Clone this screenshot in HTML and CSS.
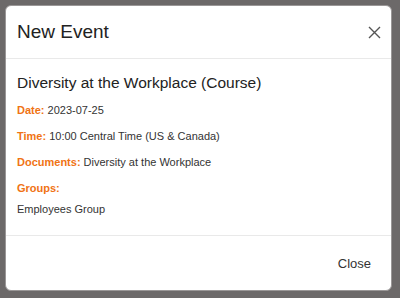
FILE: index.html
```html
<!DOCTYPE html>
<html lang="en">
<head>
    <meta charset="UTF-8">
    <meta name="viewport" content="width=device-width, initial-scale=1.0">
    <title>New Event</title>
    <link rel="stylesheet" href="styles.css">
</head>
<body>
    <div class="modal">
        <div class="modal-header">
            <h4 class="modal-title">New Event</h4>
            <button class="close" aria-label="Close">
                <svg width="13" height="13" viewBox="0 0 13 13">
                    <path d="M1 1 L12 12 M12 1 L1 12" stroke="#555" stroke-width="1.4" fill="none"/>
                </svg>
            </button>
        </div>
        <div class="modal-body">
            <h3 class="event-title">Diversity at the Workplace (Course)</h3>
            <div class="row"><span class="label">Date:</span> 2023-07-25</div>
            <div class="row"><span class="label">Time:</span> 10:00 Central Time (US &amp; Canada)</div>
            <div class="row"><span class="label">Documents:</span> Diversity at the Workplace</div>
            <div class="row"><span class="label">Groups:</span></div>
            <div class="group">Employees Group</div>
        </div>
        <div class="modal-footer">
            <button class="btn-close">Close</button>
        </div>
    </div>
</body>
</html>
```

FILE: styles.css
```css
body {
    margin: 0;
    padding: 5px 8px 7px 5px;
    background-color: #6c6969;
    font-family: "Liberation Sans", Arial, sans-serif;
    color: #333;
}
.modal {
    background-color: #fff;
    border: 1px solid #9a9797;
    border-radius: 6px;
    height: 284px;
    display: flex;
    flex-direction: column;
}
.modal-header {
    display: flex;
    align-items: center;
    justify-content: space-between;
    padding: 15px 10px 15px 11px;
    border-bottom: 1px solid #e9e9e9;
}
.modal-title {
    margin: 0;
    font-size: 19px;
    font-weight: normal;
    line-height: 22px;
    color: #222;
}
.close {
    background: none;
    border: none;
    padding: 0;
    width: 13px;
    height: 13px;
    display: flex;
}
.modal-body {
    flex: 1;
    padding: 13px 11px 0;
    font-size: 11px;
}
.event-title {
    margin: 0 0 3px;
    font-size: 15.5px;
    font-weight: normal;
    line-height: 22px;
    color: #222;
}
.row {
    line-height: 26px;
}
.label {
    color: #f07314;
    font-weight: bold;
}
.group {
    line-height: 16px;
}
.modal-footer {
    display: flex;
    justify-content: flex-end;
    align-items: center;
    height: 54px;
    border-top: 1px solid #e9e9e9;
    padding: 0 20px;
}
.btn-close {
    background: none;
    border: none;
    padding: 0;
    font-family: inherit;
    font-size: 13px;
    color: #333;
}
```
